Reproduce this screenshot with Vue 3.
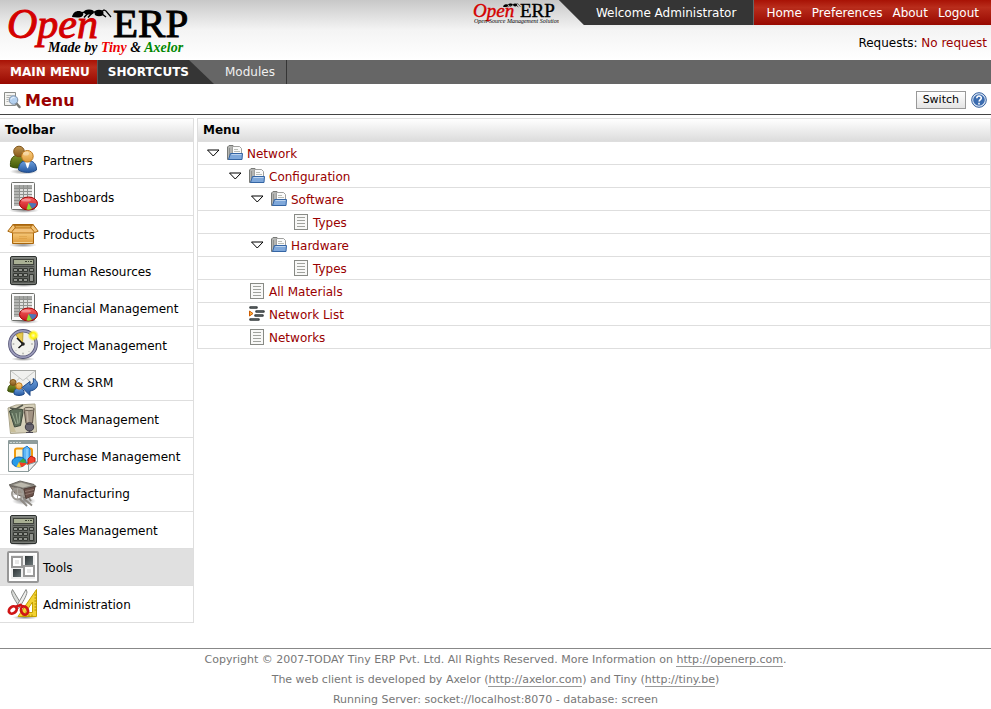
<script setup>
import { ref } from 'vue'

const account = ['Home', 'Preferences', 'About', 'Logout']

const toolbar = [
  { label: 'Partners', icon: 'partners' },
  { label: 'Dashboards', icon: 'report' },
  { label: 'Products', icon: 'box' },
  { label: 'Human Resources', icon: 'calculator' },
  { label: 'Financial Management', icon: 'report' },
  { label: 'Project Management', icon: 'clock' },
  { label: 'CRM & SRM', icon: 'mail' },
  { label: 'Stock Management', icon: 'stock' },
  { label: 'Purchase Management', icon: 'purchase' },
  { label: 'Manufacturing', icon: 'cart' },
  { label: 'Sales Management', icon: 'calculator' },
  { label: 'Tools', icon: 'tools' },
  { label: 'Administration', icon: 'admin' }
]
const active = ref('Tools')

const rows = [
  { label: 'Network', level: 0, icon: 'folder' },
  { label: 'Configuration', level: 1, icon: 'folder' },
  { label: 'Software', level: 2, icon: 'folder' },
  { label: 'Types', level: 3, icon: 'page' },
  { label: 'Hardware', level: 2, icon: 'folder' },
  { label: 'Types', level: 3, icon: 'page' },
  { label: 'All Materials', level: 1, icon: 'page' },
  { label: 'Network List', level: 1, icon: 'list' },
  { label: 'Networks', level: 1, icon: 'page' }
]
</script>

<template>
  <div class="page">
    <svg class="sprite" width="0" height="0" aria-hidden="true">
      <defs>
        <linearGradient id="g-gold" x1="0" y1="0" x2="0" y2="1"><stop offset="0" stop-color="#fbd083" /><stop offset="1" stop-color="#dd9a3a" /></linearGradient>
        <linearGradient id="g-brown" x1="0" y1="0" x2="0" y2="1"><stop offset="0" stop-color="#c09550" /><stop offset="1" stop-color="#86591a" /></linearGradient>
        <linearGradient id="g-green" x1="0" y1="0" x2="0" y2="1"><stop offset="0" stop-color="#80902a" /><stop offset="1" stop-color="#3f5808" /></linearGradient>
        <linearGradient id="g-blue" x1="0" y1="0" x2="0" y2="1"><stop offset="0" stop-color="#6c9fdc" /><stop offset="1" stop-color="#2457a0" /></linearGradient>
        <linearGradient id="g-steel" x1="0" y1="0" x2="0" y2="1"><stop offset="0" stop-color="#7d807b" /><stop offset="1" stop-color="#555853" /></linearGradient>
        <linearGradient id="g-red" x1="0" y1="0" x2="0" y2="1"><stop offset="0" stop-color="#fa6464" /><stop offset="1" stop-color="#c4161c" /></linearGradient>
        <linearGradient id="g-dark" x1="0" y1="0" x2="1" y2="1"><stop offset="0" stop-color="#2e3436" /><stop offset="1" stop-color="#6b7678" /></linearGradient>
        <radialGradient id="g-shadow"><stop offset="0" stop-color="#000" stop-opacity=".45" /><stop offset="1" stop-color="#000" stop-opacity="0" /></radialGradient>
        <radialGradient id="g-star"><stop offset="0" stop-color="#fffcc0" /><stop offset=".5" stop-color="#fff200" /><stop offset="1" stop-color="#ffef00" stop-opacity="0" /></radialGradient>

        <symbol id="i-partners" viewBox="0 0 32 32">
          <ellipse cx="17" cy="27.500" rx="14" ry="3" fill="url(#g-shadow)" />
          <path d="M3.500 22.500c-.6-6 1.500-10.500 5.500-11h6c3 .6 4 4 4 8l-2 3.500c-4 1.500-9 1.500-13.500-.5z" fill="url(#g-green)" stroke="#3c4f08" />
          <circle cx="12" cy="7.500" r="5.300" fill="url(#g-brown)" stroke="#7d5318" />
          <path d="M11.500 26c0-5.500 2.500-8.500 6-9h6c3.500.6 6 3.500 6 9-4.500 3.200-13 3.200-18 0z" fill="url(#g-blue)" stroke="#204a87" />
          <path d="M18 17.500h5L21.500 23l-1 1.500-.8-1.500z" fill="#fff" />
          <circle cx="20.400" cy="12.300" r="5.800" fill="url(#g-gold)" stroke="#bd761b" />
          <ellipse cx="19" cy="9.500" rx="3" ry="2" fill="#fff" opacity=".35" />
        </symbol>

        <symbol id="i-report" viewBox="0 0 32 32">
          <ellipse cx="17" cy="29.500" rx="15" ry="2.500" fill="url(#g-shadow)" />
          <rect x="4.500" y="1.500" width="23" height="27" rx="1" fill="#fafafa" stroke="#6f716d" />
          <rect x="7" y="4" width="18" height="21" fill="#dfe0de" />
          <rect x="7" y="4" width="5" height="21" fill="#b4b6b3" />
          <rect x="7" y="4" width="18" height="3" fill="#a4a6a3" />
          <path d="M7 7.500h18M7 10.500h18M7 13.500h18M7 16.500h18M7 19.500h18M7 22.500h18M12.500 4v21M16.500 4v21M20.500 4v21" stroke="#8f918e" fill="none" />
          <ellipse cx="21.500" cy="22.500" rx="9" ry="6.500" fill="url(#g-red)" stroke="#a40000" />
          <path d="M21.500 21.800l8 .6c-.4 2.400-2 4.300-4.500 5.200z" fill="#4c76b8" />
          <path d="M21.500 22l3.500 6c-1.800.7-4 .8-5.500.5z" fill="#8ae234" />
          <ellipse cx="19" cy="19" rx="5" ry="1.600" fill="#fff" opacity=".35" />
        </symbol>

        <symbol id="i-box" viewBox="0 0 32 32">
          <ellipse cx="16" cy="27" rx="14" ry="2.500" fill="url(#g-shadow)" />
          <path d="M5.500 13h21v12.500h-21z" fill="url(#g-gold)" stroke="#a8650c" />
          <path d="M6.500 15.500h19M6.500 24.500h19" stroke="#fbe0a8" fill="none" opacity=".8" />
          <path d="M6 6.500h20l1.500 6.500h-23z" fill="#b5741c" stroke="#a8650c" />
          <path d="M8 8h16l1 4H7z" fill="#dfa850" />
          <path d="M6 6.500L.8 13.200l4 1.500L8.500 9zM26 6.500l5.200 6.700-4 1.500L23.500 9z" fill="#f5c77d" stroke="#a8650c" stroke-linejoin="round" />
          <path d="M5 13.500L8 10h16l3 3.500v1.500H5z" fill="#f3c27a" stroke="#b97516" />
          <path d="M12 18.500h8M12 20.500h8" stroke="#d08c2c" opacity=".35" />
        </symbol>

        <symbol id="i-calculator" viewBox="0 0 32 32">
          <ellipse cx="16.500" cy="30" rx="14" ry="2" fill="url(#g-shadow)" />
          <rect x="3.500" y="1.500" width="26" height="28" rx="1.500" fill="url(#g-steel)" stroke="#2e3230" />
          <rect x="4.500" y="2.500" width="24" height="26" rx="1" fill="none" stroke="#8b8e89" opacity=".6" />
          <rect x="6.500" y="4.500" width="20" height="5" fill="#a9b094" stroke="#41443d" />
          <path d="M18 6.500h2m1 0h1m1 0h2" stroke="#3c4333" />
          <path d="M6 11.500h21" stroke="#454843" />
          <g fill="#90938d" stroke="#353833">
            <path d="M6.500 13.500h4v3h-4zM11.500 13.500h4v3h-4zM16.500 13.500h4v3h-4zM22.500 13.500h4v3h-4zM6.500 18.500h4v3h-4zM11.500 18.500h4v3h-4zM16.500 18.500h4v3h-4zM22.500 19.500h4v7h-4zM6.500 23.500h4v3h-4zM11.500 23.500h4v3h-4zM16.500 23.500h4v3h-4z" />
          </g>
        </symbol>

        <symbol id="i-clock" viewBox="0 0 32 32">
          <ellipse cx="16" cy="30" rx="12" ry="2" fill="url(#g-shadow)" />
          <circle cx="16" cy="15" r="13.200" fill="#f1f1ec" stroke="#555577" stroke-width="3.400" />
          <circle cx="16" cy="15" r="13.200" fill="none" stroke="#9c9cba" stroke-width="1.800" />
          <path d="M15.500 15L9 6c2-1.500 4.500-2.300 7-2.300z" fill="#e7c94d" stroke="#a98d1c" stroke-width=".7" />
          <g fill="#b9bab5"><circle cx="6.500" cy="15" r="1" /><circle cx="25" cy="15" r="1" /><circle cx="16" cy="24.500" r="1" /><circle cx="22" cy="22.500" r=".6" /><circle cx="9" cy="21.500" r=".6" /></g>
          <path d="M10 9l6 6-4.500 4" fill="none" stroke="#111" stroke-width="1.500" />
          <circle cx="16" cy="15" r="1.800" fill="#222" />
          <circle cx="26.300" cy="6.500" r="5.700" fill="url(#g-star)" />
        </symbol>

        <symbol id="i-mail" viewBox="0 0 32 32">
          <rect x="3.500" y="4.500" width="25" height="17" fill="#f1f1ef" stroke="#a5a6a3" />
          <path d="M4 5l12 9.500L28 5M4 21l8.500-9M28 21l-8.500-9" fill="none" stroke="#c4c5c2" />
          <path d="M.8 25c0-4 1.500-6.500 4-6.500h3c2.400 0 3.500 2.500 3.500 6-3 2.300-7.500 2.300-10.500.5z" fill="url(#g-green)" stroke="#3c4f08" />
          <circle cx="6" cy="16.500" r="3" fill="url(#g-brown)" stroke="#7d5318" />
          <path d="M7 28c0-4 1.500-5.500 3.500-5.500h3c2.500 0 3.700 2 3.700 5.500-3 2-7.500 2-10.200 0z" fill="url(#g-blue)" stroke="#204a87" />
          <circle cx="12" cy="20" r="3.200" fill="url(#g-gold)" stroke="#bd761b" />
          <path d="M15 21.500l8-6v3.500c3-.5 4-3 3.200-6.500 6 2.500 6.500 11-3.200 12.500v4.500z" fill="url(#g-blue)" stroke="#204a87" stroke-linejoin="round" />
        </symbol>

        <symbol id="i-stock" viewBox="0 0 32 32">
          <path d="M1 5l8-3 19-1 1.500 28L3.500 30.500 2 15z" fill="#d6d0b9" stroke="#a8a28a" />
          <path d="M2 7l4 15 3 7H3.500z" fill="#c9bf9a" />
          <path d="M2.500 8l5-2.500 8 1 .5 3-2.500 13-6 1.500z" fill="#60705c" stroke="#3d473a" />
          <path d="M5 10l4 11M9 10l2 11M13 9l-1 11" stroke="#98a890" />
          <path d="M3 5l6 1 7-4" stroke="#55584d" fill="none" stroke-width="1.500" />
          <path d="M17 6l10-.5L25.500 20l-6.500.5z" fill="#a29383" stroke="#5d5046" />
          <ellipse cx="22" cy="6" rx="5.200" ry="1.700" fill="#cdc4b2" stroke="#6a6153" />
          <path d="M20 8l1 11" stroke="#c2b5a5" stroke-width="1.500" />
          <circle cx="22.500" cy="24" r="4.200" fill="#68646e" stroke="#3d3a42" />
          <path d="M19 21.500h7M22.500 27v2.500M19 29.500h7" stroke="#4c4852" />
        </symbol>

        <symbol id="i-purchase" viewBox="0 0 32 32">
          <path d="M1.500.5h29v21l-9 10h-20z" fill="#fbfbfb" stroke="#8c9a9a" />
          <path d="M2 1h28v3H2z" fill="#8f9d9c" /><path d="M3 2.500h12" stroke="#c8d2d1" stroke-dasharray="2 1" />
          <rect x="8" y="8.500" width="17" height="15" rx="2" fill="#fff3c8" stroke="#ee9b10" stroke-width="2" />
          <path d="M16 9l4-3 3 3v14h-7z" fill="#5fb7f5" stroke="#1c75cf" /><path d="M20 9v13" stroke="#a9dcff" />
          <path d="M21 19l3-3 4 2v6.500l-3 1.500-4-1z" fill="#f5412d" stroke="#b81c10" />
          <ellipse cx="12" cy="22" rx="7" ry="5" fill="#289be8" stroke="#0f5fae" />
          <path d="M12 22l7 1c-.5 2-2 3.500-5 4z" fill="#f33f22" /><path d="M12 22l2 5c-1.500.3-3 .2-4.500-.2z" fill="#ffd42c" /><path d="M12 22l7 1c0-2-1-3.500-3-4.500z" fill="#3aab3c" />
          <path d="M21.500 31.500v-7l9-3z" fill="#eceeee" stroke="#8c9a9a" />
        </symbol>

        <symbol id="i-cart" viewBox="0 0 32 32">
          <ellipse cx="17" cy="24" rx="12" ry="4" fill="url(#g-shadow)" />
          <path d="M2 8l11-4 14 3.500 2 2L17 12z" fill="#8b8880" stroke="#6a6761" />
          <path d="M6 8l8-2.500 10 3-8 2z" fill="#bcb9ad" />
          <path d="M3 9l14 3 2 9.500-11-5z" fill="#9a9288" stroke="#6a645e" />
          <path d="M17 12l11-2.500-2 9.500-7 2.500z" fill="#6a5048" stroke="#503e37" />
          <path d="M18 14.500l9-2M18.500 17.500l8-2" stroke="#917a70" />
          <circle cx="10.500" cy="17" r="5.500" fill="none" stroke="#9c9993" stroke-width="2" />
          <path d="M10.500 11.500v11M5 17h11" stroke="#aeaaa4" />
          <path d="M16 21l9 7.500M13 22l7 7M22 21l2 3" stroke="#8d8983" stroke-width="1.800" fill="none" />
        </symbol>

        <symbol id="i-tools" viewBox="0 0 32 32">
          <rect x="1" y="1" width="30" height="30" rx="1" fill="#fff" stroke="#979797" stroke-width="2" />
          <rect x="4" y="4" width="24" height="24" fill="#efefef" />
          <rect x="18" y="5" width="8" height="9" fill="url(#g-dark)" />
          <rect x="6" y="18" width="8" height="8" fill="url(#g-dark)" />
          <rect x="5" y="6" width="10" height="10" fill="#fff" stroke="#999" stroke-width="2" />
          <rect x="17" y="15" width="10" height="10" fill="#fff" stroke="#999" stroke-width="2" />
          <rect x="8" y="9" width="4" height="4" fill="#e7e7e7" /><rect x="20" y="18" width="4" height="4" fill="#e7e7e7" />
        </symbol>

        <symbol id="i-admin" viewBox="0 0 32 32">
          <ellipse cx="18" cy="29.500" rx="13" ry="2" fill="url(#g-shadow)" />
          <path d="M29.500 1.500v27H11z" fill="#f3d233" stroke="#c4a000" stroke-linejoin="round" />
          <path d="M25.500 14v10.500h-7z" fill="#fff" stroke="#c4a000" />
          <path d="M27.500 7h2M27.500 10h2M27.500 13h2M27.500 16h2M27.500 19h2M27.500 22h2M16 26.500v2M19 26.500v2M22 26.500v2M25 26.500v2" stroke="#a98a00" />
          <path d="M5.500 1.500L16 19l-2.500 1.500C9 14 5 8 4.500 4z" fill="#d9dbd8" stroke="#858784" />
          <path d="M19 1.500L9 19l2.500 1.500C16 14 19.500 8 20 4z" fill="#eeeeec" stroke="#858784" />
          <ellipse cx="5.800" cy="22" rx="4.200" ry="3.300" transform="rotate(-35 5.800 22)" fill="none" stroke="#d01515" stroke-width="2.700" />
          <ellipse cx="17.500" cy="22.500" rx="3.300" ry="4.300" transform="rotate(-25 17.500 22.500)" fill="none" stroke="#d01515" stroke-width="2.700" />
          <path d="M8.500 19l5-2 3 2" fill="none" stroke="#d01515" stroke-width="2.500" />
        </symbol>

        <symbol id="i-folder" viewBox="0 0 16 16">
          <path d="M.5 14.500V2L2 .5h4l1.500 1.500h5v12z" fill="#b4b5b3" stroke="#787a77" />
          <path d="M2.500 3v8" stroke="#8f918e" />
          <path d="M5.500 1.500h7l2 2v7h-9z" fill="#fafafa" stroke="#a0a19f" />
          <path d="M7 4.500h4M7 6.500h6" stroke="#babdb6" />
          <path d="M3.500 8.500h12l-.5 6H1.500z" fill="#7fa8da" stroke="#3465a4" stroke-linejoin="round" />
          <path d="M4.500 9.500h10" stroke="#bcd3ee" />
        </symbol>
        <symbol id="i-page" viewBox="0 0 16 16">
          <rect x="1.500" y=".5" width="13" height="15" fill="#f8f8f7" stroke="#888a85" />
          <path d="M4 3.500h8M4 6.500h8M4 9.500h8M4 12.500h8" stroke="#a0a29d" />
        </symbol>
        <symbol id="i-list" viewBox="0 0 16 16">
          <path d="M1.500 1.500h6M7.500 5.500h7M6.500 9.500h7M1.500 13.500h8" stroke="#2e3436" stroke-width="2.600" stroke-linecap="round" />
          <path d="M1.500 1.500h6M7.500 5.500h7M6.500 9.500h7M1.500 13.500h8" stroke="#6a7072" stroke-width=".6" />
          <path d="M.5 5l3.500 2.500L.5 10z" fill="#fcaf3e" stroke="#ce5c00" />
        </symbol>
        <symbol id="i-ant" viewBox="0 0 40 10">
          <path d="M0 8C1 3 5 1 9 2.500c3 1 3 4.500 0 5.500-3 .9-6 .5-9 0z" />
          <ellipse cx="17" cy="3" rx="5" ry="2.600" /><ellipse cx="27" cy="4" rx="4.500" ry="3.300" />
          <path d="M9 4l8-2M17 3l-5 5.500M20 4l-4 4.500M22 3h6M30 5l4 3" fill="none" stroke="#000" stroke-width="1.500" />
          <path d="M29 3l3-2 2 1 5 6" fill="none" stroke="#000" stroke-width="1.200" />
        </symbol>
      </defs>
    </svg>

    <header class="header">
      <a class="brand" href="#" aria-label="Open ERP">
        <svg width="196" height="60" viewBox="0 0 196 60">
          <text x="7" y="38" class="logo red" font-size="42">Open</text>
          <text x="113" y="37" class="logo upright" font-size="41">ERP</text>
          <use href="#i-ant" x="72" y="9" width="40" height="10" />
          <text x="48" y="52" class="logo tag" font-size="14">Made by <tspan fill="#e00">Tiny</tspan> &amp; <tspan fill="#080">Axelor</tspan></text>
        </svg>
      </a>
      <div class="corner">
        <div class="strip">
          <svg class="mini" width="87" height="25" viewBox="0 0 87 25">
            <text x="1" y="17" class="logo red thin" font-size="19">Open</text>
            <text x="48" y="17" class="logo upright thin" font-size="19">ERP</text>
            <use href="#i-ant" x="31" y="3" width="18" height="5" />
            <text x="2" y="23" class="logo" font-size="6">Open-Source Management Solution</text>
          </svg>
          <div class="welcome">Welcome Administrator</div>
          <nav class="account">
            <a v-for="item in account" :key="item" href="#">{{ item }}</a>
          </nav>
        </div>
        <div class="requests">Requests: <a href="#">No request</a></div>
      </div>
    </header>

    <nav class="tabs">
      <a class="tab main" href="#">MAIN MENU</a>
      <a class="tab short" href="#">SHORTCUTS</a>
      <span class="wedge"></span>
      <a class="tab link" href="#">Modules</a>
    </nav>

    <div class="title">
      <svg width="17" height="17" viewBox="0 0 17 17">
        <path d="M.5.5h11v13H.5z" fill="#f4f4f2" stroke="#8b8d89" />
        <path d="M2.500 3.500h5M2.500 5.500h3M2.500 7.500h2M2.500 9.500h2" stroke="#b3b5b1" />
        <path d="M12.500 11.500l3 3.500" stroke="#777975" stroke-width="2.500" stroke-linecap="round" />
        <circle cx="9.500" cy="8" r="4.300" fill="#b4d1f0" stroke="#7b8ea5" />
        <path d="M7 7.500c.5-1.500 2-2.200 3.500-1.800" stroke="#fff" fill="none" />
      </svg>
      <h1>Menu</h1>
      <button type="button" class="switch">Switch</button>
      <a href="#" class="help" aria-label="Help">
        <svg width="16" height="16" viewBox="0 0 16 16">
          <circle cx="8" cy="8" r="7.300" fill="#dfe9f6" stroke="#2f5c9c" />
          <circle cx="8" cy="8" r="5.800" fill="#3b6cb0" />
          <path d="M5.800 6.200c.1-3 4.600-2.800 4.500-.2 0 1.600-2 1.700-2.200 3.500M8 10.700v1.700" fill="none" stroke="#fff" stroke-width="1.600" />
        </svg>
      </a>
    </div>

    <main class="body">
      <section class="panel side">
        <h2>Toolbar</h2>
        <a
          v-for="item in toolbar"
          :key="item.label"
          href="#"
          class="tool"
          :class="{ active: item.label === active }"
          @click.prevent="active = item.label"
        >
          <svg width="32" height="32"><use :href="'#i-' + item.icon" /></svg>
          <span>{{ item.label }}</span>
        </a>
      </section>

      <table class="panel tree">
        <thead>
          <tr><th>Menu</th></tr>
        </thead>
        <tbody>
          <tr v-for="(row, i) in rows" :key="i">
            <td>
              <div class="node" :class="'level' + row.level">
                <svg class="arrow" width="14" height="8" viewBox="0 0 14 8">
                  <path v-if="row.icon === 'folder'" d="M1.500 1h11.500L7.250 7z" fill="#fff" stroke="#000" />
                </svg>
                <svg width="16" height="16"><use :href="'#i-' + row.icon" /></svg>
                <a href="#">{{ row.label }}</a>
              </div>
            </td>
          </tr>
        </tbody>
      </table>
    </main>

    <footer class="footer">
      <p>Copyright © 2007-TODAY Tiny ERP Pvt. Ltd. All Rights Reserved. More Information on <a href="#">http://openerp.com</a>.</p>
      <p>The web client is developed by Axelor (<a href="#">http://axelor.com</a>) and Tiny (<a href="#">http://tiny.be</a>)</p>
      <p>Running Server: socket://localhost:8070 - database: screen</p>
    </footer>
  </div>
</template>

<style>
body {
  background: #fff;
}
</style>

<style scoped>
.page {
  font: 12px/16px "DejaVu Sans", Verdana, sans-serif;
  color: #000;
}
a {
  color: #990000;
  text-decoration: none;
}
svg {
  display: block;
  flex: none;
}
.sprite {
  position: absolute;
}
.header {
  display: flex;
  justify-content: space-between;
  height: 60px;
  background: linear-gradient(#c8c8c8, #f4f4f4 50%, #fff);
}
.logo {
  font-family: "Liberation Serif", serif;
  font-style: italic;
}
.red {
  fill: #d40000;
  stroke: #d40000;
  stroke-width: 1;
}
.upright {
  font-style: normal;
  stroke: #000;
  stroke-width: 1;
}
.thin {
  stroke-width: 0.4;
}
.tag {
  font-weight: bold;
}
.strip {
  display: flex;
  justify-content: flex-end;
  height: 25px;
  line-height: 25px;
}
.welcome,
.account {
  box-sizing: border-box;
  height: 25px;
  padding-top: 1px;
}
.welcome {
  padding-left: 37px;
  padding-right: 17px;
  background: #353535;
  color: #fff;
  clip-path: polygon(0 0, 100% 0, 100% 100%, 25px 100%);
}
.account {
  display: flex;
  gap: 10px;
  padding-left: 12px;
  padding-right: 12px;
  border-left: 1px solid #666;
  background: linear-gradient(#a81205, #b92d1c 30%, #980800);
}
.account a {
  color: #fff;
}
.requests {
  padding: 10px 4px 0 0;
  text-align: right;
}
.tabs {
  display: flex;
  height: 24px;
  line-height: 24px;
  background: #666;
}
.tab {
  color: #fff;
}
.main,
.short {
  font-weight: bold;
}
.main {
  padding: 0 7px 0 10px;
  border-right: 1px solid #555;
  background: linear-gradient(#a81205, #b92d1c 30%, #980800);
}
.short {
  padding-left: 10px;
  background: #353535;
}
.wedge {
  width: 25px;
  background: #353535;
  clip-path: polygon(0 0, 100% 100%, 0 100%);
}
.link {
  padding: 0 11px;
  border-right: 1px solid #353535;
  color: #f0f0f0;
}
.title {
  display: flex;
  align-items: center;
  height: 28px;
  padding: 2px 4px 0;
  margin-bottom: 3px;
  border-bottom: 1px solid #444;
}
h1 {
  flex: 1;
  margin: 0 0 0 4px;
  padding-top: 2px;
  font-size: 16px;
  font-weight: bold;
  line-height: 24px;
  color: #990000;
}
.switch {
  height: 18px;
  padding: 0 6px;
  border: 1px solid #999;
  background: linear-gradient(#fff, #e4e4e4);
  font: 11px/16px "DejaVu Sans", sans-serif;
}
.help {
  margin-left: 5px;
}
.body {
  display: flex;
  align-items: flex-start;
  gap: 3px;
}
.panel {
  box-sizing: border-box;
  border: 1px solid #dedede;
}
.side {
  flex: none;
  width: 194px;
  border-left: 0;
  border-bottom: 0;
}
h2,
th {
  height: 22px;
  margin: 0;
  padding: 0 5px;
  border-bottom: 1px solid #dedede;
  background: linear-gradient(#fff, #dcdcdc);
  font-size: 12px;
  font-weight: bold;
  line-height: 22px;
  text-align: left;
}
.tool {
  display: flex;
  align-items: center;
  gap: 4px;
  height: 36px;
  padding-left: 7px;
  border-bottom: 1px solid #dedede;
  color: #000;
}
.tool span,
.node a {
  padding-top: 2px;
}
.active {
  background: #e0e0e0;
}
.tree {
  flex: 1;
  display: block;
  border-bottom: 0;
  border-spacing: 0;
}
.tree thead,
.tree tbody,
.tree tr,
.tree th,
.tree td {
  display: block;
}
td {
  height: 22px;
  padding: 0;
  border-bottom: 1px solid #dedede;
}
.node {
  display: flex;
  align-items: center;
  height: 22px;
  padding-left: 8px;
}
.arrow {
  margin-right: 7px;
}
.node a {
  margin-left: 4px;
}
.level1 {
  padding-left: 30px;
}
.level2 {
  padding-left: 52px;
}
.level3 {
  padding-left: 74px;
}
.footer {
  margin-top: 25px;
  padding-top: 1px;
  border-top: 1px solid #888;
  color: #777;
  font-size: 11px;
  line-height: 20px;
  text-align: center;
}
.footer p {
  margin: 0;
}
.footer a {
  color: #777;
  border-bottom: 1px solid #999;
}
</style>
